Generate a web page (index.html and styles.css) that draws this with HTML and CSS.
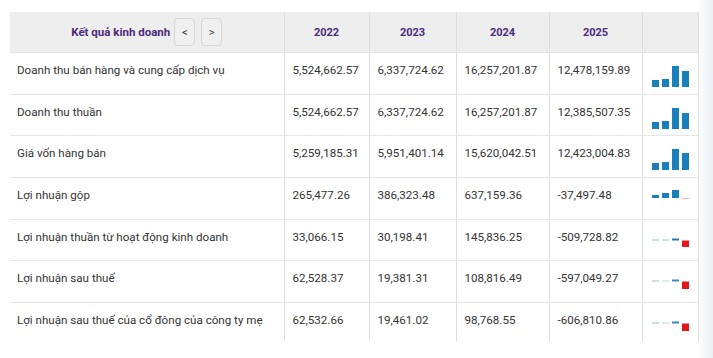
FILE: index.html
```html
<!DOCTYPE html>
<html lang="vi">
<head>
<meta charset="utf-8">
<title>Kết quả kinh doanh</title>
<link rel="stylesheet" href="styles.css">
</head>
<body>
<table class="kq">
  <colgroup>
    <col class="c-label"><col class="c-y1"><col class="c-y2"><col class="c-y3"><col class="c-y4"><col class="c-chart">
  </colgroup>
  <thead>
    <tr>
      <th class="title-cell">
        <div class="title-wrap">
          <span class="title">Kết quả kinh doanh</span>
          <button class="nav-btn">&lt;</button>
          <button class="nav-btn">&gt;</button>
        </div>
      </th>
      <th>2022</th>
      <th>2023</th>
      <th>2024</th>
      <th>2025</th>
      <th class="chart-h"></th>
    </tr>
  </thead>
  <tbody>
    <tr>
      <td class="label">Doanh thu bán hàng và cung cấp dịch vụ</td>
      <td>5,524,662.57</td><td>6,337,724.62</td><td>16,257,201.87</td><td>12,478,159.89</td>
      <td class="chart"><svg width="56" height="38" viewBox="0 0 56 38"><g fill="#1a80bb"><rect x="9" y="27" width="7" height="7"/><rect x="19" y="26" width="7" height="8"/><rect x="29" y="13" width="7" height="21"/><rect x="39" y="18" width="7" height="16"/></g></svg></td>
    </tr>
    <tr>
      <td class="label">Doanh thu thuần</td>
      <td>5,524,662.57</td><td>6,337,724.62</td><td>16,257,201.87</td><td>12,385,507.35</td>
      <td class="chart"><svg width="56" height="38" viewBox="0 0 56 38"><g fill="#1a80bb"><rect x="9" y="27" width="7" height="7"/><rect x="19" y="26" width="7" height="8"/><rect x="29" y="13" width="7" height="21"/><rect x="39" y="18" width="7" height="16"/></g></svg></td>
    </tr>
    <tr>
      <td class="label">Giá vốn hàng bán</td>
      <td>5,259,185.31</td><td>5,951,401.14</td><td>15,620,042.51</td><td>12,423,004.83</td>
      <td class="chart"><svg width="56" height="38" viewBox="0 0 56 38"><g fill="#1a80bb"><rect x="9" y="27" width="7" height="7"/><rect x="19" y="26" width="7" height="8"/><rect x="29" y="13" width="7" height="21"/><rect x="39" y="17" width="7" height="17"/></g></svg></td>
    </tr>
    <tr>
      <td class="label">Lợi nhuận gộp</td>
      <td>265,477.26</td><td>386,323.48</td><td>637,159.36</td><td>-37,497.48</td>
      <td class="chart"><svg width="56" height="38" viewBox="0 0 56 38"><g fill="#1a80bb"><rect x="9" y="17" width="7" height="3"/><rect x="19" y="15" width="7" height="5"/><rect x="29" y="12" width="7" height="8"/></g><rect x="39" y="20" width="7" height="1" fill="#f2b0b0"/></svg></td>
    </tr>
    <tr>
      <td class="label">Lợi nhuận thuần từ hoạt động kinh doanh</td>
      <td>33,066.15</td><td>30,198.41</td><td>145,836.25</td><td>-509,728.82</td>
      <td class="chart"><svg width="56" height="38" viewBox="0 0 56 38"><g fill="#8cc1db"><rect x="9" y="19.5" width="7" height="1"/><rect x="19" y="19.5" width="7" height="1"/></g><rect x="29" y="18.5" width="7" height="2" fill="#2a7fb0"/><rect x="39" y="20.5" width="7" height="6.5" fill="#e3161c"/></svg></td>
    </tr>
    <tr>
      <td class="label">Lợi nhuận sau thuế</td>
      <td>62,528.37</td><td>19,381.31</td><td>108,816.49</td><td>-597,049.27</td>
      <td class="chart"><svg width="56" height="38" viewBox="0 0 56 38"><g fill="#8cc1db"><rect x="9" y="19.5" width="7" height="1"/><rect x="19" y="19.5" width="7" height="1" fill="#b5d7e8"/></g><rect x="29" y="18.5" width="7" height="2" fill="#3b8ab6"/><rect x="39" y="20.5" width="7" height="7.5" fill="#e3161c"/></svg></td>
    </tr>
    <tr class="last">
      <td class="label">Lợi nhuận sau thuế của cổ đông của công ty mẹ</td>
      <td>62,532.66</td><td>19,461.02</td><td>98,768.55</td><td>-606,810.86</td>
      <td class="chart"><svg width="56" height="38" viewBox="0 0 56 38"><g fill="#8cc1db"><rect x="9" y="19.5" width="7" height="1"/><rect x="19" y="19.5" width="7" height="1" fill="#b5d7e8"/></g><rect x="29" y="18.5" width="7" height="2" fill="#3b8ab6"/><rect x="39" y="20.5" width="7" height="7.5" fill="#e3161c"/></svg></td>
    </tr>
  </tbody>
</table>
</body>
</html>
```
FILE: styles.css
```css
html, body {
  margin: 0;
  height: 100%;
}
body {
  padding: 12px 0 0 10px;
  box-sizing: border-box;
  background: linear-gradient(to right, #ffffff 698px, #f6f7f9 704px, #eceef2 713px);
  font-family: Roboto, "Liberation Sans", sans-serif;
}
.kq {
  border-collapse: collapse;
  table-layout: fixed;
  width: 688px;
  background: #fff;
}
.c-label { width: 274px; }
.c-y1 { width: 85px; }
.c-y2 { width: 87px; }
.c-y3 { width: 93px; }
.c-y4 { width: 93px; }
.c-chart { width: 56px; }

.kq th {
  height: 40px;
  padding: 0;
  background: #eeeeee;
  color: #4a2b7b;
  font-size: 11px;
  font-weight: 700;
  text-align: center;
  vertical-align: middle;
  border-right: 1px solid #dedede;
  border-bottom: 1px solid #e4e4e4;
}
.title-wrap {
  display: flex;
  align-items: center;
  justify-content: center;
  gap: 6px;
}
.title {
  margin-right: -2px;
  font-size: 11.5px;
}
.nav-btn {
  width: 21px;
  height: 28px;
  padding: 0;
  border: 1px solid #d6d6d6;
  border-radius: 4px;
  background: #f0f0f0;
  color: #444;
  font-family: Roboto, "Liberation Sans", sans-serif;
  font-size: 11px;
  font-weight: 400;
}
.kq td {
  height: 41.67px;
  box-sizing: border-box;
  padding: 10px 0 0 8px;
  vertical-align: top;
  font-size: 11.6px;
  line-height: 14px;
  color: #333;
  border-right: 1px solid #dedede;
  border-bottom: 1px solid #e6e6e6;
  white-space: nowrap;
}
.kq td.label { padding-left: 7px; }
.kq td.chart { padding: 0; }
.kq td.chart svg { display: block; }
.kq tr.last td {
  height: 38px;
  border-bottom: none;
}
```
